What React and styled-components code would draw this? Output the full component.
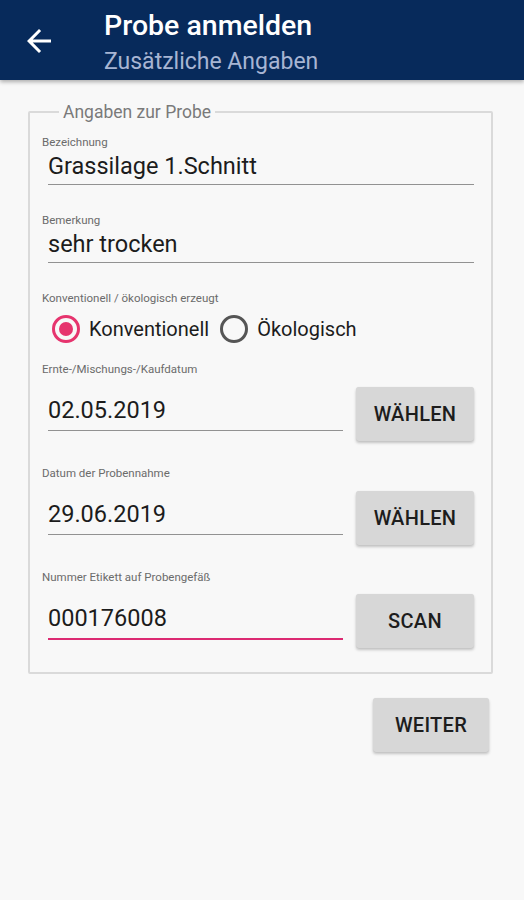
import styled, { createGlobalStyle } from "styled-components";

const GlobalStyle = createGlobalStyle`
  body {
    margin: 0;
    background: #f8f8f8;
    font-family: Roboto, "Noto Sans", Arial, sans-serif;
  }
`;

const Page = styled.div`
  width: 524px;
  min-height: 900px;
  background: #f8f8f8;
`;

const Header = styled.header`
  height: 80px;
  background: #072a5b;
  display: flex;
  align-items: flex-start;
  box-shadow: 0 2px 4px rgba(0, 0, 0, 0.3);
  position: relative;
`;

const BackButton = styled.div`
  width: 36px;
  height: 36px;
  margin: 23px 0 0 21px;
  display: flex;
`;

const HeaderText = styled.div`
  display: flex;
  flex-direction: column;
  margin-left: 47px;
  padding-top: 9px;
`;

const Title = styled.h1`
  margin: 0;
  font-size: 28.5px;
  line-height: 34px;
  font-weight: 500;
  color: #fff;
`;

const Subtitle = styled.div`
  margin-top: 5px;
  font-size: 23px;
  line-height: 28px;
  color: #a7b5d3;
`;

const Fieldset = styled.fieldset`
  margin: 22px 31px 0 28px;
  padding: 0 17px 24px 12px;
  border: 2px solid #dadada;
  border-radius: 2px;
`;

const Legend = styled.legend`
  margin-left: 17px;
  padding: 0 4px;
  font-size: 17.5px;
  line-height: 20px;
  color: #7a7a7a;
`;

const Field = styled.div`
  margin-top: ${(p) => p.$top || 0}px;
`;

const Label = styled.div`
  font-size: 11.5px;
  line-height: 14px;
  color: #6b6b6b;
`;

const Input = styled.div`
  margin-left: 6px;
  height: ${(p) => p.$height || 35}px;
  line-height: ${(p) => p.$height || 35}px;
  margin-top: ${(p) => p.$top || 0}px;
  font-size: 23.5px;
  color: #1c1c1c;
  border-bottom: ${(p) => (p.$active ? "2px solid #dc2a72" : "1.5px solid #929292")};
  flex: 1;
`;

const Row = styled.div`
  display: flex;
  align-items: flex-start;
  gap: 13px;
`;

const Button = styled.button`
  width: ${(p) => p.$width || 118}px;
  height: 54px;
  margin-top: ${(p) => p.$top || 0}px;
  border: none;
  border-radius: 3px;
  background: #d7d7d7;
  box-shadow: 0 2px 3px rgba(0, 0, 0, 0.22), 0 0 1px rgba(0, 0, 0, 0.1);
  font-family: Roboto, Arial, sans-serif;
  font-size: 20px;
  font-weight: 500;
  color: #1d1d1d;
  letter-spacing: 0.3px;
  padding: 0;
`;

const RadioGroup = styled.div`
  display: flex;
  align-items: center;
  height: 48px;
  margin-left: 10px;
  margin-bottom: 9px;
`;

const RadioItem = styled.label`
  display: flex;
  align-items: center;
  gap: 9px;
  margin-right: 11px;
  font-size: 20px;
  color: #1c1c1c;
`;

const RadioCircle = styled.span`
  width: 28px;
  height: 28px;
  box-sizing: border-box;
  border-radius: 50%;
  border: 3px solid ${(p) => (p.$checked ? "#e6346e" : "#555")};
  display: flex;
  align-items: center;
  justify-content: center;
  &::after {
    content: "";
    width: 14px;
    height: 14px;
    border-radius: 50%;
    background: ${(p) => (p.$checked ? "#e6346e" : "transparent")};
  }
`;

const Footer = styled.div`
  display: flex;
  justify-content: flex-end;
  padding: 24px 35px 0 0;
`;

const ArrowBack = () => (
  <svg width="36" height="36" viewBox="0 0 24 24" fill="#fff">
    <path d="M20 11H7.83l5.59-5.59L12 4l-8 8 8 8 1.41-1.41L7.83 13H20v-2z" />
  </svg>
);

const App = () => {
  return (
    <Page>
      <GlobalStyle />
      <Header>
        <BackButton>
          <ArrowBack />
        </BackButton>
        <HeaderText>
          <Title>Probe anmelden</Title>
          <Subtitle>Zusätzliche Angaben</Subtitle>
        </HeaderText>
      </Header>

      <Fieldset>
        <Legend>Angaben zur Probe</Legend>
        <Field $top={13}>
          <Label>Bezeichnung</Label>
          <Input>Grassilage 1.Schnitt</Input>
        </Field>
        <Field $top={28}>
          <Label>Bemerkung</Label>
          <Input>sehr trocken</Input>
        </Field>
        <Field $top={28}>
          <Label>Konventionell / ökologisch erzeugt</Label>
          <RadioGroup>
            <RadioItem>
              <RadioCircle $checked />
              Konventionell
            </RadioItem>
            <RadioItem>
              <RadioCircle />
              Ökologisch
            </RadioItem>
          </RadioGroup>
        </Field>
        <Field>
          <Label>Ernte-/Mischungs-/Kaufdatum</Label>
          <Row>
            <Input $height={40} $top={14}>02.05.2019</Input>
            <Button $top={11}>WÄHLEN</Button>
          </Row>
        </Field>
        <Field $top={25}>
          <Label>Datum der Probennahme</Label>
          <Row>
            <Input $height={40} $top={14}>29.06.2019</Input>
            <Button $top={11}>WÄHLEN</Button>
          </Row>
        </Field>
        <Field $top={25}>
          <Label>Nummer Etikett auf Probengefäß</Label>
          <Row>
            <Input $height={40} $top={14} $active>000176008</Input>
            <Button $top={10}>SCAN</Button>
          </Row>
        </Field>
      </Fieldset>

      <Footer>
        <Button $width={116}>WEITER</Button>
      </Footer>
    </Page>
  );
};

export default App;
